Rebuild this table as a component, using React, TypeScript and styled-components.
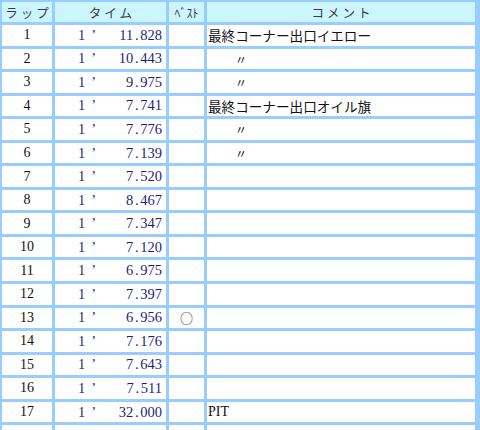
import React from "react";
import styled, { createGlobalStyle } from "styled-components";

const GlobalStyle = createGlobalStyle`
  html, body {
    margin: 0;
    padding: 0;
    background: #99ccff;
    overflow: hidden;
  }
`;

type Lap = {
  no: number;
  sec: string;
  best?: boolean;
  comment?: string;
  ditto?: boolean;
};

const laps: Lap[] = [
  { no: 1, sec: "11.828", comment: "最終コーナー出口イエロー" },
  { no: 2, sec: "10.443", ditto: true },
  { no: 3, sec: "9.975", ditto: true },
  { no: 4, sec: "7.741", comment: "最終コーナー出口オイル旗" },
  { no: 5, sec: "7.776", ditto: true },
  { no: 6, sec: "7.139", ditto: true },
  { no: 7, sec: "7.520" },
  { no: 8, sec: "8.467" },
  { no: 9, sec: "7.347" },
  { no: 10, sec: "7.120" },
  { no: 11, sec: "6.975" },
  { no: 12, sec: "7.397" },
  { no: 13, sec: "6.956", best: true },
  { no: 14, sec: "7.176" },
  { no: 15, sec: "7.643" },
  { no: 16, sec: "7.511" },
  { no: 17, sec: "32.000", comment: "PIT" },
];

export default function App() {
  return (
    <>
      <GlobalStyle />
      <Table>
        <colgroup>
          <col style={{ width: 50 }} />
          <col style={{ width: 111 }} />
          <col style={{ width: 35 }} />
          <col style={{ width: 268 }} />
        </colgroup>
        <thead>
          <tr>
            <Th>ラップ</Th>
            <Th>タイム</Th>
            <Th $small>ﾍﾞｽﾄ</Th>
            <Th>コメント</Th>
          </tr>
        </thead>
        <tbody>
          {laps.map((lap) => {
            const [whole, frac] = lap.sec.split(".");
            return (
              <tr key={lap.no}>
                <NoCell>{lap.no}</NoCell>
                <Td>
                  <Time>
                    <Minute>
                      1<Quote>’</Quote>
                    </Minute>
                    <span>
                      {whole}
                      <Dot>.</Dot>
                      {frac}
                    </span>
                  </Time>
                </Td>
                <BestCell>{lap.best ? "○" : ""}</BestCell>
                <CommentCell $serif={lap.comment === "PIT"}>
                  {lap.ditto ? <Ditto>〃</Ditto> : lap.comment}
                </CommentCell>
              </tr>
            );
          })}
          <tr>
            <NoCell />
            <Td />
            <BestCell />
            <CommentCell />
          </tr>
        </tbody>
      </Table>
    </>
  );
}

const Table = styled.table`
  table-layout: fixed;
  width: 479px;
  margin: -1px 0 0 -1px;
  border-collapse: separate;
  border-spacing: 3px;
  background: #99ccff;
`;

const Th = styled.th<{ $small?: boolean }>`
  height: 20px;
  padding: 0 0 0 ${(p) => (p.$small ? "0" : "3px")};
  background: #ccf6ff;
  color: #3a3a3a;
  font-family: "Noto Sans CJK JP", sans-serif;
  font-weight: 400;
  font-size: ${(p) => (p.$small ? "12px" : "12.5px")};
  letter-spacing: ${(p) => (p.$small ? "0" : "3px")};
  text-align: center;
  white-space: nowrap;
`;

const Td = styled.td`
  height: 20.55px;
  padding: 0;
  background: #ffffff;
  white-space: nowrap;
  overflow: hidden;
`;

const NoCell = styled(Td)`
  text-align: center;
  font-family: "Liberation Serif", serif;
  font-size: 14px;
  color: #111;
`;

const Time = styled.div`
  display: flex;
  justify-content: space-between;
  padding: 0 4px 0 23px;
  font-family: "Liberation Serif", serif;
  font-size: 14.5px;
  color: #1f1f78;
`;

const Minute = styled.span``;

const Quote = styled.span`
  padding-left: 6px;
`;

const Dot = styled.span`
  display: inline-block;
  width: 7px;
  text-align: center;
`;

const BestCell = styled(Td)`
  text-align: center;
  font-family: "Noto Sans CJK JP", sans-serif;
  font-size: 13px;
  color: #333;
`;

const CommentCell = styled(Td)<{ $serif?: boolean }>`
  padding-left: 1px;
  font-family: ${(p) =>
    p.$serif ? `"Liberation Serif", serif` : `"Noto Sans CJK JP", sans-serif`};
  font-size: ${(p) => (p.$serif ? "14px" : "13.6px")};
  color: #111;
`;

const Ditto = styled.span`
  display: inline-block;
  padding-left: 27px;
  font-size: 12px;
`;
